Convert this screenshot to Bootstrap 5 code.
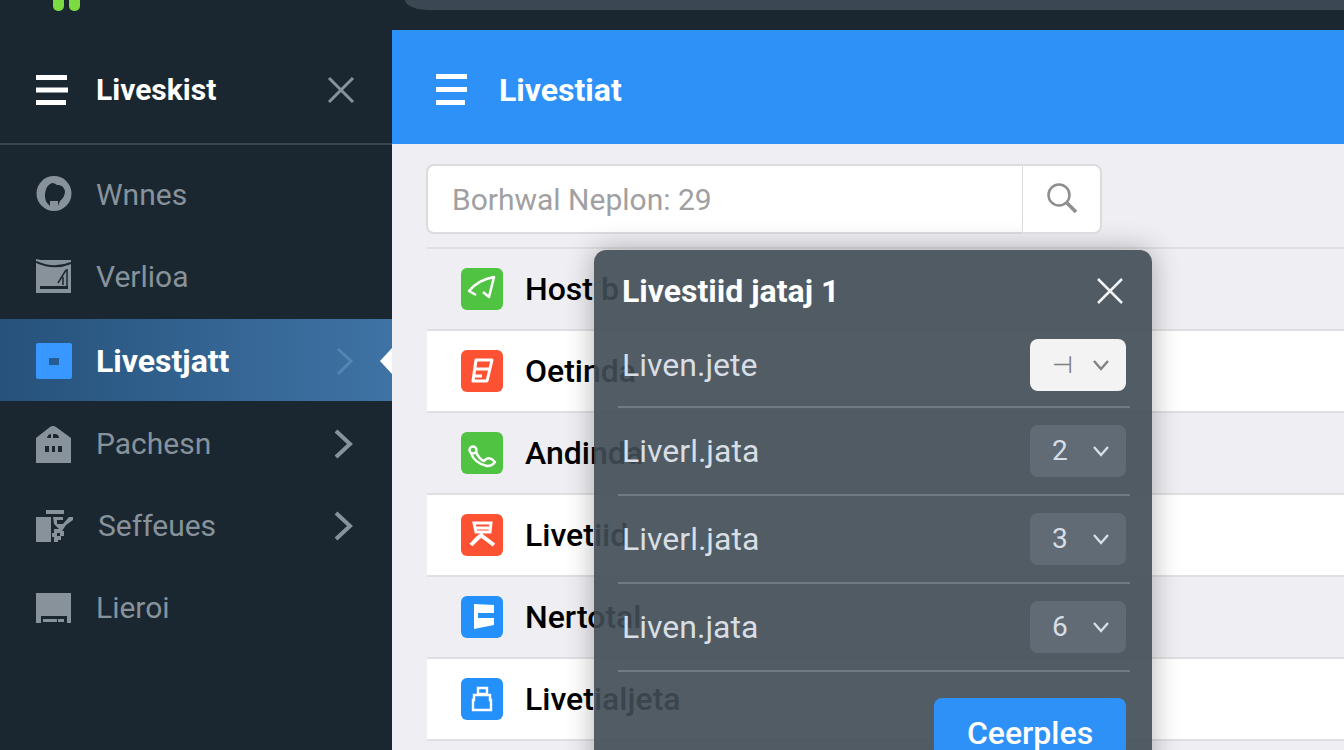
<!DOCTYPE html>
<html lang="en">
<head>
<meta charset="utf-8">
<meta name="viewport" content="width=device-width, initial-scale=1">
<title>Livestiat</title>
<link href="https://cdn.jsdelivr.net/npm/bootstrap@5.3.0/dist/css/bootstrap.min.css" rel="stylesheet">
<style>
  body { font-family: Roboto, "Liberation Sans", sans-serif; background: #1a2731; color: #000; }
  .app { height: 100vh; }
  .app-top { height: 30px; padding-left: 53px; }
  .brand-bar { width: 11px; height: 11px; margin-right: 5px; background: #7ddb42; border-radius: 0 0 5px 5px; }
  .top-pill { height: 10px; margin-left: 320px; background: #3b4753; border-bottom-left-radius: 24px 10px; }
  .side { width: 392px; }
  .head { height: 114px; color: #fff; }
  .side .head { padding: 6px 36px 0; height: 115px; border-bottom: 2px solid #3a4750; }
  .main .head { padding: 6px 43px 0; background: #2e91f8; }
  .head h1, .dlg h3 { font-size: 32px; font-weight: 700; line-height: 40px; margin: 0; }
  .head h2 { font-size: 30px; font-weight: 700; line-height: 40px; margin: 0; }
  .plain { background: none; border: 0; padding: 0; color: inherit; line-height: 0; }
  .side-nav { padding-top: 8px; }
  .side-nav a { height: 82px; padding: 0 36px; gap: 24px; font-size: 30px; color: #87929a; text-decoration: none; }
  .side-nav a.current { margin-top: 2px; padding-top: 2px; color: #fff; font-size: 32px; font-weight: 700; background: linear-gradient(90deg, #26527b, #3f73a5); }
  .side-nav a.current ~ a { padding-top: 3px; }
  .side-nav .notch { position: absolute; right: 0; top: 29px; }
  .main { background: #efeff3; min-width: 0; }
  .search { margin: 20px 0 0 34px; width: 676px; max-width: 90%; height: 70px; }
  .search .form-control { border: 2px solid #dcdcdf; border-right: 0; border-radius: 8px; padding: 0 24px; font-size: 30px; color: #999; }
  .search .form-control::placeholder { color: #a0a0a2; opacity: 1; }
  .search .btn { width: 80px; background: #fff; border: 2px solid #dcdcdf; border-left-width: 1px; border-radius: 8px; }
  .rows { margin: 13px 0 0 35px; }
  .rows li { height: 82px; padding-left: 34px; gap: 22px; border-top: 2px solid #e0e0e2; font-size: 32px; font-weight: 500; }
  .rows li:nth-child(even) { background: #fff; }
  .dlg { position: absolute; left: 202px; top: 220px; width: 558px; height: 580px; padding: 0 22px 0 24px; border-radius: 12px; background: rgba(64,76,85,.91); box-shadow: 0 0 28px rgba(0,0,0,.3); color: #fff; }
  .dlg-head { height: 81px; padding: 0 4px; }
  .dlg-line { height: 88px; padding: 0 4px; border-bottom: 2px solid #6f7b83; font-size: 32px; color: #d7dee5; }
  .dlg-head + .dlg-line { height: 77px; padding-bottom: 8px; }
  .dlg .form-select { width: 96px; height: 52px; padding: 0 0 0 22px; border: 0; border-radius: 8px; font-size: 28px; color: #d7dee5; background-color: #606b75; background-size: 24px 24px; background-position: right 13px center;
    background-image: url("data:image/svg+xml,%3Csvg xmlns='http://www.w3.org/2000/svg' viewBox='0 0 24 24'%3E%3Cpath d='M5 8l7 8 7-8' fill='none' stroke='%23d7dee5' stroke-width='2.4'/%3E%3C/svg%3E"); }
  .dlg .form-select.lit { color: #808080; background-color: #f3f3f4; font-family: "DejaVu Sans", sans-serif; font-size: 24px;
    background-image: url("data:image/svg+xml,%3Csvg xmlns='http://www.w3.org/2000/svg' viewBox='0 0 24 24'%3E%3Cpath d='M5 8l7 8 7-8' fill='none' stroke='%23808080' stroke-width='2.4'/%3E%3C/svg%3E"); }
  .dlg .btn { width: 192px; height: 70px; margin: 26px 4px 0 0; border-radius: 8px; background: #2e91f8; color: #fff; font-size: 32px; font-weight: 500; }
</style>
</head>
<body>
<div class="app d-flex flex-column overflow-hidden">
  <div class="app-top d-flex align-items-start flex-shrink-0">
    <span class="brand-bar"></span><span class="brand-bar"></span>
    <div class="top-pill flex-grow-1"></div>
  </div>
  <div class="d-flex flex-grow-1">
    <aside class="side flex-shrink-0">
      <div class="head d-flex align-items-center">
        <button class="plain" aria-label="Menu"><svg width="32" height="32" fill="#fff"><path d="M0 1h31v5H0zM0 13.500h32v5H0zM0 26h30v5H0z"/></svg></button>
        <h2 class="ms-4 ps-1">Liveskist</h2>
        <button class="plain ms-auto" aria-label="Close"><svg width="30" height="30" fill="none" stroke="#87929b" stroke-width="3"><path d="M3 3l24 24M27 3L3 27"/></svg></button>
      </div>
      <nav class="side-nav d-flex flex-column">
        <a href="#" class="d-flex align-items-center">
          <svg width="36" height="36" fill="#87929a"><path fill-rule="evenodd" d="M18 0a17.500 17.500 0 1 0 0 35 17.500 17.500 0 1 0 0-35zM16 7q3 0 5 2 6-1 8 6 0 6-5 10l-2 5v-5h-8v5q-6-5-5-12 1-9 7-11z"/></svg>Wnnes</a>
        <a href="#" class="d-flex align-items-center">
          <svg width="36" height="36"><path fill="#87929a" d="M0 1l5 1h30v33H0z"/><g fill="none" stroke="#1a2731"><path d="M0 4q18 8 35 1" stroke-width="2"/><path d="M4 29.500h28" stroke-width="3"/><path d="M31 11v19M30 12l-8 13M27 19v8" stroke-width="1.500"/></g></svg>Verlioa</a>
        <a href="#" class="current d-flex align-items-center position-relative">
          <svg width="36" height="36"><rect width="36" height="36" rx="2" fill="#3898ff"/><path fill="#255d93" d="M13 15h10v7H13z"/></svg>Livestjatt
          <svg class="ms-auto" width="22" height="32" fill="none" stroke="#5585b2" stroke-width="3"><path d="M4 4l13 12L4 29"/></svg>
          <svg class="notch" width="12" height="26" fill="#fff"><path d="M12 0v26L0 13z"/></svg></a>
        <a href="#" class="d-flex align-items-center">
          <svg width="36" height="38"><path fill="#87929a" d="M0 13L14 2q3-2 6 0l15 11v25H0z"/><path fill="#1a2731" d="M11 13q1-4 4-4v4zM17 9h3q3 1 3 4h-6zM9 21h4v6H9zM16 21h3v6h-3zM22 21h4v6h-4z"/></svg>Pachesn
          <svg class="ms-auto" width="22" height="32" fill="none" stroke="#87929a" stroke-width="4"><path d="M2 3l14 13L2 29"/></svg></a>
        <a href="#" class="d-flex align-items-center">
          <svg width="38" height="36" class="me-n1" fill="#87929a"><path d="M10 2h18v4H10zM0 9h15v25H0zM17 9h10v3h-6v4h6l6-7h4v3l-7 5-4 6h2v5h-4v-3h-3v3h4v4h-3v2h-4v-5h-2v-4h2v-4h5l-5-5z"/></svg>Seffeues
          <svg class="ms-auto" width="22" height="32" fill="none" stroke="#87929a" stroke-width="4"><path d="M2 3l14 13L2 29"/></svg></a>
        <a href="#" class="d-flex align-items-center">
          <svg width="36" height="32" fill="#87929a"><path d="M0 1h35v30h-4v-7H5v7H0zM7 27h14v3H7zM22 27h6v3h-6z"/></svg>Lieroi</a>
      </nav>
    </aside>
    <main class="main flex-grow-1 position-relative">
      <header class="head d-flex align-items-center">
        <button class="plain" aria-label="Menu"><svg width="32" height="32" fill="#fff"><path d="M1 0h31v5H1zM1 13h31v5H1zM1 26h29v5H1z"/></svg></button>
        <h1 class="ms-4 ps-2">Livestiat</h1>
      </header>
      <form class="search input-group">
        <input class="form-control" type="text" aria-label="Search" placeholder="Borhwal Neplon: 29">
        <button class="btn" type="button" aria-label="Search"><svg width="32" height="32" fill="none" stroke="#8e8e8e"><circle cx="13" cy="12" r="10.500" stroke-width="2.500"/><path d="M21 20l9 9" stroke-width="3.500"/></svg></button>
      </form>
      <ul class="rows list-unstyled">
        <li class="d-flex align-items-center"><svg width="42" height="42"><rect width="42" height="42" rx="6" fill="#51c343"/><path fill="none" stroke="#fff" stroke-width="2.500" stroke-linejoin="round" d="M15 27l-7-4q9-11 25-14l-5 20-6-5"/></svg>Host b</li>
        <li class="d-flex align-items-center"><svg width="42" height="42"><rect width="42" height="42" rx="6" fill="#fd5133"/><path fill="none" stroke="#fff" stroke-width="3" stroke-linejoin="round" d="M15 10h16l-5 21H12zM13 19h15M12 26h9"/></svg>Oetinda</li>
        <li class="d-flex align-items-center"><svg width="42" height="42"><rect width="42" height="42" rx="6" fill="#51c343"/><g fill="none" stroke="#fff" stroke-width="2.500" stroke-linejoin="round"><circle cx="12" cy="18" r="3.500"/><path d="M10 21q3 10 16 13 5 0 8-4-6-7-11-1-5-2-8-9"/></g></svg>Andinda</li>
        <li class="d-flex align-items-center"><svg width="42" height="42"><rect width="42" height="42" rx="6" fill="#fd5133"/><path fill="none" stroke="#fff" stroke-width="3" d="M13 9h17l-1 9H15zM14 14h15"/><path fill="none" stroke="#fff" stroke-width="4" d="M22 20q-6 4-12 11M21 22l12 9"/></svg>Livetiid</li>
        <li class="d-flex align-items-center"><svg width="42" height="42"><rect width="42" height="42" rx="6" fill="#2491fb"/><path fill="#fff" d="M13 8l20 1v8H17v5h16v7l-20 4z"/></svg>Nertotal</li>
        <li class="d-flex align-items-center"><svg width="42" height="42"><rect width="42" height="42" rx="6" fill="#2491fb"/><path fill="none" stroke="#fff" stroke-width="2.400" d="M17 10h9v6h-9zM13 17h16v5h1v10H12V22h1z"/></svg>Livetialjeta</li>
        <li class="d-flex align-items-center"></li>
      </ul>
      <section class="dlg" role="dialog" aria-labelledby="dlg-title">
        <header class="dlg-head d-flex align-items-center justify-content-between">
          <h3 id="dlg-title">Livestiid jataj 1</h3>
          <button class="plain" aria-label="Close dialog"><svg width="32" height="32" fill="none" stroke="#f1f4f6" stroke-width="2.500"><path d="M4 4l24 24M28 4L4 28"/></svg></button>
        </header>
        <div class="dlg-line d-flex align-items-center justify-content-between"><label for="s1">Liven.jete</label><select id="s1" class="form-select lit"><option>⊣</option></select></div>
        <div class="dlg-line d-flex align-items-center justify-content-between"><label for="s2">Liverl.jata</label><select id="s2" class="form-select"><option>2</option></select></div>
        <div class="dlg-line d-flex align-items-center justify-content-between"><label for="s3">Liverl.jata</label><select id="s3" class="form-select"><option>3</option></select></div>
        <div class="dlg-line d-flex align-items-center justify-content-between"><label for="s4">Liven.jata</label><select id="s4" class="form-select"><option>6</option></select></div>
        <div class="text-end"><button class="btn" type="button">Ceerples</button></div>
      </section>
    </main>
  </div>
</div>
<script src="https://cdn.jsdelivr.net/npm/bootstrap@5.3.0/dist/js/bootstrap.bundle.min.js"></script>
</body>
</html>
